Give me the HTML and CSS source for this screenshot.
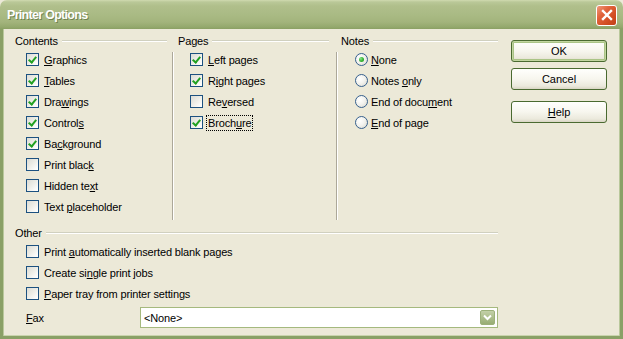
FILE: index.html
```html
<!DOCTYPE html>
<html>
<head>
<meta charset="utf-8">
<link rel="stylesheet" href="styles.css">
</head>
<body>
<div class="window">
  <div class="titlebar">
    <span class="title">Printer Options</span>
    <span class="close"><svg width="12" height="12" viewBox="0 0 12 12"><path d="M2 2 L10 10 M10 2 L2 10" stroke="#fff" stroke-width="2.4" stroke-linecap="square"/></svg></span>
  </div>
  <div class="frame">
    <div class="main">
      <div class="groups">
        <section class="group col-contents">
          <div class="ghead"><span>Contents</span><i class="rule"></i></div>
          <div class="opts">
            <div class="opt"><span class="cb on"></span><span><u>G</u>raphics</span></div>
            <div class="opt"><span class="cb on"></span><span><u>T</u>ables</span></div>
            <div class="opt"><span class="cb on"></span><span>Dra<u>w</u>ings</span></div>
            <div class="opt"><span class="cb on"></span><span>Control<u>s</u></span></div>
            <div class="opt"><span class="cb on"></span><span>Ba<u>c</u>kground</span></div>
            <div class="opt"><span class="cb"></span><span>Print blac<u>k</u></span></div>
            <div class="opt"><span class="cb"></span><span>Hidden te<u>x</u>t</span></div>
            <div class="opt"><span class="cb"></span><span>Text <u>p</u>laceholder</span></div>
          </div>
        </section>
        <div class="vsep"></div>
        <section class="group col-pages">
          <div class="ghead"><span>Pages</span><i class="rule"></i></div>
          <div class="opts">
            <div class="opt"><span class="cb on"></span><span><u>L</u>eft pages</span></div>
            <div class="opt"><span class="cb on"></span><span>R<u>i</u>ght pages</span></div>
            <div class="opt"><span class="cb"></span><span>Re<u>v</u>ersed</span></div>
            <div class="opt"><span class="cb on"></span><span class="focus">Broch<u>u</u>re</span></div>
          </div>
        </section>
        <div class="vsep"></div>
        <section class="group col-notes">
          <div class="ghead"><span>Notes</span><i class="rule"></i></div>
          <div class="opts">
            <div class="opt"><span class="rb on"></span><span><u>N</u>one</span></div>
            <div class="opt"><span class="rb"></span><span>Notes <u>o</u>nly</span></div>
            <div class="opt"><span class="rb"></span><span>End of docu<u>m</u>ent</span></div>
            <div class="opt"><span class="rb"></span><span><u>E</u>nd of page</span></div>
          </div>
        </section>
      </div>
      <section class="group other">
        <div class="ghead"><span>Other</span><i class="rule"></i></div>
        <div class="opts">
          <div class="opt"><span class="cb"></span><span>Print <u>a</u>utomatically inserted blank pages</span></div>
          <div class="opt"><span class="cb"></span><span>Create si<u>n</u>gle print jobs</span></div>
          <div class="opt"><span class="cb"></span><span><u>P</u>aper tray from printer settings</span></div>
        </div>
      </section>
      <div class="fax-row">
        <span class="fax-label"><u>F</u>ax</span>
        <div class="combo">
          <span class="combo-text">&lt;None&gt;</span>
          <span class="combo-btn"><svg width="9" height="7" viewBox="0 0 9 7"><path d="M1 1.5 L4.5 5 L8 1.5" fill="none" stroke="#fff" stroke-width="2"/></svg></span>
        </div>
      </div>
    </div>
    <div class="buttons">
      <button class="btn default">OK</button>
      <button class="btn">Cancel</button>
      <button class="btn help"><u>H</u>elp</button>
    </div>
  </div>
</div>
</body>
</html>
```
FILE: styles.css
```css
html, body {
  margin: 0;
  padding: 0;
  background: #ece9d8;
}
body {
  font-family: "Liberation Sans", Arial, sans-serif;
  font-size: 11px;
  letter-spacing: -0.15px;
  color: #000;
}
u { text-decoration: underline; text-underline-offset: 1px; }

.window {
  width: 623px;
  height: 339px;
  display: flex;
  flex-direction: column;
  overflow: hidden;
}

.titlebar {
  height: 29px;
  flex: none;
  display: flex;
  align-items: center;
  padding: 0 6px 0 7px;
  border-radius: 7px 7px 0 0;
  background: linear-gradient(#d0dab0 0px, #bac898 2px, #b0bf8b 6px, #aabb85 14px, #a3b47c 22px, #94a86d 27px, #8a9f63 29px);
}
.title {
  flex: 1;
  color: #fff;
  font-family: "Liberation Sans", Arial, sans-serif;
  font-weight: bold;
  font-size: 12.5px;
  letter-spacing: -0.7px;
  text-shadow: 1px 1px 0 #6f8350;
  padding-top: 1px;
}
.close {
  width: 19px;
  height: 19px;
  margin-top: 1px;
  border: 1px solid #fff;
  border-radius: 3px;
  background: linear-gradient(135deg, #ef9a7c 0%, #e1633b 35%, #cf4a1f 75%, #c2401a 100%);
  display: flex;
  align-items: center;
  justify-content: center;
}

.frame {
  flex: 1;
  display: flex;
  gap: 13px;
  padding: 5px 13px 0 12px;
  border: 3px solid #8aa066;
  border-top: 0;
  box-shadow: inset 1px 0 0 #b9c89b, inset -1px 0 0 #b9c89b, inset 0 -1px 0 #c9d4ad;
  background: #ece9d8;
}

.main {
  width: 483px;
  flex: none;
  display: flex;
  flex-direction: column;
}

.groups {
  display: grid;
  grid-template-columns: 152px 11px 155px 8px 157px;
  height: 186px;
}

.ghead {
  height: 14px;
  display: flex;
  align-items: center;
}
.ghead .rule {
  flex: 1;
  height: 0;
  border-top: 1px solid #d0d0bf;
  border-bottom: 1px solid #fff;
  margin-left: 4px;
}
.col-pages .ghead .rule { margin-right: 4px; }

.vsep {
  width: 0;
  margin-top: 18px;
  height: 168px;
  border-left: 1px solid #aca899;
  border-right: 1px solid #fff;
}
.groups .vsep:nth-child(2) { margin-left: 5px; }
.groups .vsep:nth-child(4) { margin-left: 3px; }

.opts {
  margin-top: 1px;
  display: flex;
  flex-direction: column;
}
.opt {
  height: 21px;
  display: flex;
  align-items: center;
  gap: 5px;
  white-space: nowrap;
}
.col-contents .opts, .other .opts { padding-left: 11px; }
.col-pages .opts { padding-left: 12px; }
.col-notes .opts { padding-left: 14px; }
.col-notes .opt { gap: 3px; }

.cb {
  width: 11px;
  height: 11px;
  flex: none;
  border: 1px solid #1c5180;
  background: linear-gradient(135deg, #dcdcd5 0%, #ececE6 45%, #fafaf8 80%, #fff 100%);
  position: relative;
}
.cb.on::after {
  content: "";
  position: absolute;
  left: 3px;
  top: 1px;
  width: 3px;
  height: 6px;
  border-right: 2px solid #21a121;
  border-bottom: 2px solid #21a121;
  transform: rotate(40deg);
}

.rb {
  width: 11px;
  height: 11px;
  flex: none;
  border: 1px solid #36608e;
  border-radius: 50%;
  background: radial-gradient(circle at 35% 35%, #fff 0%, #f3f3ef 45%, #d6d6cd 100%);
  position: relative;
}
.rb.on::after {
  content: "";
  position: absolute;
  left: 3px;
  top: 3px;
  width: 5px;
  height: 5px;
  border-radius: 50%;
  background: radial-gradient(circle at 35% 35%, #8ee68e 0%, #35b535 50%, #1d8e1d 100%);
}

.focus {
  outline: 1px dotted #000;
  outline-offset: 1px;
}

.other {
  margin-top: 6px;
}

.fax-row {
  margin-top: 3px;
  display: flex;
  align-items: center;
}
.fax-label {
  width: 125px;
  padding-left: 11px;
  box-sizing: border-box;
}
.combo {
  width: 358px;
  height: 21px;
  box-sizing: border-box;
  border: 1px solid #a5b97e;
  background: #fff;
  display: flex;
  align-items: center;
  padding: 0 2px 0 3px;
}
.combo-text { flex: 1; }
.combo-btn {
  width: 15px;
  height: 15px;
  box-sizing: border-box;
  border: 1px solid #9cb07a;
  border-radius: 2px;
  background: linear-gradient(#c3d0a8, #a9bb88 60%, #98ad74);
  display: flex;
  align-items: center;
  justify-content: center;
}

.buttons {
  width: 96px;
  flex: none;
  display: flex;
  flex-direction: column;
  padding-top: 6px;
}
.btn {
  width: 96px;
  height: 22px;
  margin: 0;
  padding: 0;
  font: inherit;
  color: #000;
  border: 1px solid #4a6a30;
  border-radius: 3px;
  background: linear-gradient(#fffffd 0%, #f7f6ee 50%, #ebe9dc 85%, #d9d5c4 100%);
}
.btn.default {
  box-shadow: inset 0 0 0 1px #c2d6a0, inset 0 0 0 2px #aac486;
}
.btn + .btn { margin-top: 6px; }
.btn.help { margin-top: 11px; }
```
